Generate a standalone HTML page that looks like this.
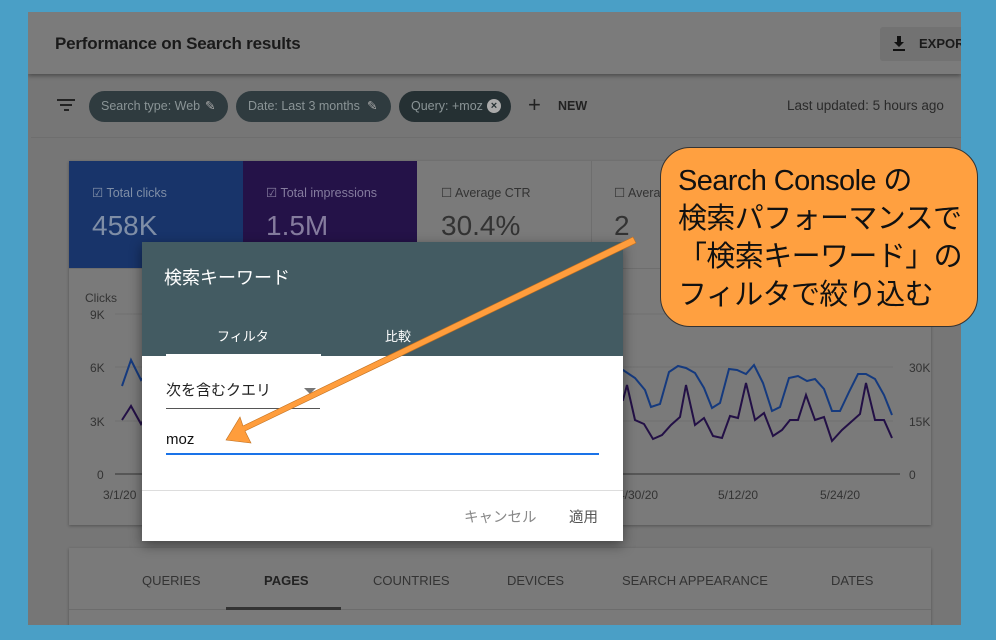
<!DOCTYPE html>
<html><head><meta charset="utf-8"><style>
*{box-sizing:border-box;margin:0;padding:0}
body{width:996px;height:640px;overflow:hidden;background:#4a9fc6;font-family:"Liberation Sans","Noto Sans CJK JP",sans-serif;position:relative}
.abs{position:absolute}
.panel{left:28px;top:12px;width:933px;height:613px;background:#767676;overflow:hidden}
.hdr{left:0;top:0;width:933px;height:62px;background:#7b7b7b;box-shadow:0 2px 4px rgba(0,0,0,.35)}
.chip{top:79px;height:31px;border-radius:16px;background:#2f3b3f;color:#8a9496;font-size:12.5px;line-height:31px;padding-left:12px}
.card{background:#7a7a7a;box-shadow:0 1px 3px rgba(0,0,0,.3)}
.t{color:#333;font-size:12px}
</style></head><body>
<div class="abs panel">
 <div class="abs hdr">
  <div class="abs" style="left:27px;top:22px;font-size:17px;color:#1a1a1a;font-weight:bold;letter-spacing:-.2px">Performance on Search results</div>
  <div class="abs" style="left:852px;top:15px;width:90px;height:34px;background:#727272;border-radius:3px"></div>
  <svg class="abs" style="left:862px;top:22px" width="18" height="18"><path d="M4 8h3V2h4v6h3l-5 5z" fill="#111"/><rect x="3" y="15" width="12" height="2" fill="#111"/></svg>
  <div class="abs" style="left:891px;top:24px;font-size:13px;font-weight:bold;color:#1a1a1a">EXPORT</div>
 </div>
 <svg class="abs" style="left:29px;top:86px" width="20" height="14"><rect x="0" y="1" width="18" height="2" fill="#222"/><rect x="3" y="6" width="12" height="2" fill="#222"/><rect x="7" y="11" width="5" height="2" fill="#222"/></svg>
 <div class="abs chip" style="left:61px;width:139px">Search type: Web <span style="position:absolute;left:116px;color:#aaa">✎</span></div>
 <div class="abs chip" style="left:208px;width:155px">Date: Last 3 months <span style="position:absolute;left:131px;color:#aaa">✎</span></div>
 <div class="abs chip" style="left:371px;width:112px;background:#253033">Query: +moz <span style="position:absolute;left:88px;top:8px;width:14px;height:14px;border-radius:50%;background:#aaa;color:#253033;font-size:11px;line-height:14px;text-align:center;font-weight:bold">×</span></div>
 <div class="abs" style="left:500px;top:80px;font-size:22px;color:#222">+</div>
 <div class="abs" style="left:530px;top:87px;font-size:12.5px;font-weight:bold;color:#222">NEW</div>
 <div class="abs" style="left:759px;top:86px;font-size:13.5px;color:#2a2a2a">Last updated: 5 hours ago</div>
 <div class="abs" style="left:3px;top:125px;width:930px;height:1px;background:#6e6e6e"></div>
 <div class="abs card" style="left:41px;top:149px;width:862px;height:364px"></div>
 <div class="abs" style="left:41px;top:149px;width:174px;height:107px;background:#18346a"></div>
 <div class="abs" style="left:215px;top:149px;width:174px;height:107px;background:#241248"></div>
 <div class="abs" style="left:563px;top:149px;width:1px;height:107px;background:#6e6e6e"></div>
 <div class="abs" style="left:41px;top:256px;width:862px;height:1px;background:#6e6e6e"></div>
 <div class="abs" style="left:64px;top:173px;font-size:12.5px;color:#7f8ea6">☑ Total clicks</div>
 <div class="abs" style="left:64px;top:198px;font-size:28px;color:#7f8ea6">458K</div>
 <div class="abs" style="left:238px;top:173px;font-size:12.5px;color:#857c9e">☑ Total impressions</div>
 <div class="abs" style="left:238px;top:198px;font-size:28px;color:#857c9e">1.5M</div>
 <div class="abs" style="left:413px;top:173px;font-size:12.5px;color:#333">☐ Average CTR</div>
 <div class="abs" style="left:413px;top:198px;font-size:28px;color:#333">30.4%</div>
 <div class="abs" style="left:586px;top:173px;font-size:12.5px;color:#333">☐ Average position</div>
 <div class="abs" style="left:586px;top:198px;font-size:28px;color:#333">2</div>
 <div class="abs t" style="left:57px;top:279px">Clicks</div>
 <div class="abs t" style="left:62px;top:296px">9K</div>
 <div class="abs t" style="left:62px;top:349px">6K</div>
 <div class="abs t" style="left:62px;top:403px">3K</div>
 <div class="abs t" style="left:69px;top:456px">0</div>
 <div class="abs t" style="left:75px;top:476px">3/1/20</div>
 <div class="abs t" style="left:590px;top:476px">4/30/20</div>
 <div class="abs t" style="left:690px;top:476px">5/12/20</div>
 <div class="abs t" style="left:792px;top:476px">5/24/20</div>
 <div class="abs t" style="left:881px;top:349px">30K</div>
 <div class="abs t" style="left:881px;top:403px">15K</div>
 <div class="abs t" style="left:881px;top:456px">0</div>
 <div class="abs card" style="left:41px;top:536px;width:862px;height:90px"></div>
 <div class="abs" style="left:41px;top:597px;width:862px;height:1px;background:#6c6c6c"></div>
 <div class="abs" style="left:198px;top:595px;width:115px;height:3px;background:#333"></div>
 <div class="abs" style="left:114px;top:561px;font-size:13px;color:#333">QUERIES</div>
 <div class="abs" style="left:236px;top:561px;font-size:13px;color:#222;font-weight:bold">PAGES</div>
 <div class="abs" style="left:345px;top:561px;font-size:13px;color:#333">COUNTRIES</div>
 <div class="abs" style="left:479px;top:561px;font-size:13px;color:#333">DEVICES</div>
 <div class="abs" style="left:594px;top:561px;font-size:13px;color:#333">SEARCH APPEARANCE</div>
 <div class="abs" style="left:803px;top:561px;font-size:13px;color:#333">DATES</div>
</div>
<svg class="abs" style="left:0;top:0" width="996" height="640">
 <line x1="115" y1="314" x2="893" y2="314" stroke="#707070"/>
 <line x1="115" y1="367" x2="893" y2="367" stroke="#707070"/>
 <line x1="115" y1="421" x2="893" y2="421" stroke="#707070"/>
 <line x1="115" y1="474" x2="900" y2="474" stroke="#333"/>
 <polyline fill="none" stroke="#153a7e" stroke-width="2" points="122,386 131,360 141,380 150,370 623,370 635,378 645,390 651,407 660,404 669,372 678,366 686,368 695,373 704,388 712,408 720,403 729,369 737,370 746,374 754,365 763,383 772,411 780,407 789,378 798,376 807,381 815,379 824,389 832,411 840,411 849,392 858,374 866,374 875,379 884,395 892,415"/>
 <polyline fill="none" stroke="#231046" stroke-width="2" points="122,420 131,406 141,424 150,410 623,400 627,385 635,420 644,424 653,439 662,435 671,425 680,417 686,385 695,425 704,418 713,436 722,438 730,416 738,418 746,383 755,420 764,413 773,436 782,430 790,420 798,420 806,395 815,420 824,417 832,441 842,430 851,422 860,414 866,383 875,420 884,420 892,438"/>
</svg>
<div class="abs" style="left:142px;top:242px;width:481px;height:299px;background:#fff;box-shadow:0 4px 12px rgba(0,0,0,.45)">
 <div class="abs" style="left:0;top:0;width:481px;height:114px;background:#435b62"></div>
 <div class="abs" style="left:22px;top:22px;font-size:18px;color:#fff">検索キーワード</div>
 <div class="abs" style="left:75px;top:84px;font-size:13px;color:#fff">フィルタ</div>
 <div class="abs" style="left:243px;top:84px;font-size:13px;color:#fff">比較</div>
 <div class="abs" style="left:24px;top:112px;width:155px;height:3px;background:#fff"></div>
 <div class="abs" style="left:24px;top:137px;font-size:15px;color:#222">次を含むクエリ</div>
 <div class="abs" style="left:162px;top:146px;width:0;height:0;border-left:6px solid transparent;border-right:6px solid transparent;border-top:6px solid #777"></div>
 <div class="abs" style="left:24px;top:166px;width:154px;height:1px;background:#555"></div>
 <div class="abs" style="left:24px;top:189px;font-size:15px;color:#111">moz</div>
 <div class="abs" style="left:24px;top:211px;width:433px;height:2px;background:#1a73e8"></div>
 <div class="abs" style="left:0;top:248px;width:481px;height:1px;background:#ddd"></div>
 <div class="abs" style="left:322px;top:264px;font-size:14.5px;color:#888">キャンセル</div>
 <div class="abs" style="left:427px;top:264px;font-size:14.5px;color:#555">適用</div>
</div>
<svg class="abs" style="left:0;top:0" width="996" height="640">
 <polygon points="633,237 636,243 245,431 251,443 226,440 240,417 243,426" fill="#ff9d3c" stroke="#c07020" stroke-width=".6"/>
</svg>
<div class="abs" style="left:660px;top:147px;width:318px;height:180px;background:#ffa040;border:1.5px solid #333;border-radius:30px"></div>
<div class="abs" style="left:678px;top:162px;font-size:29px;line-height:38px;color:#111;letter-spacing:-.6px;white-space:nowrap">Search Console の<br>検索パフォーマンスで<br>「検索キーワード」の<br>フィルタで絞り込む</div>
</body></html>
